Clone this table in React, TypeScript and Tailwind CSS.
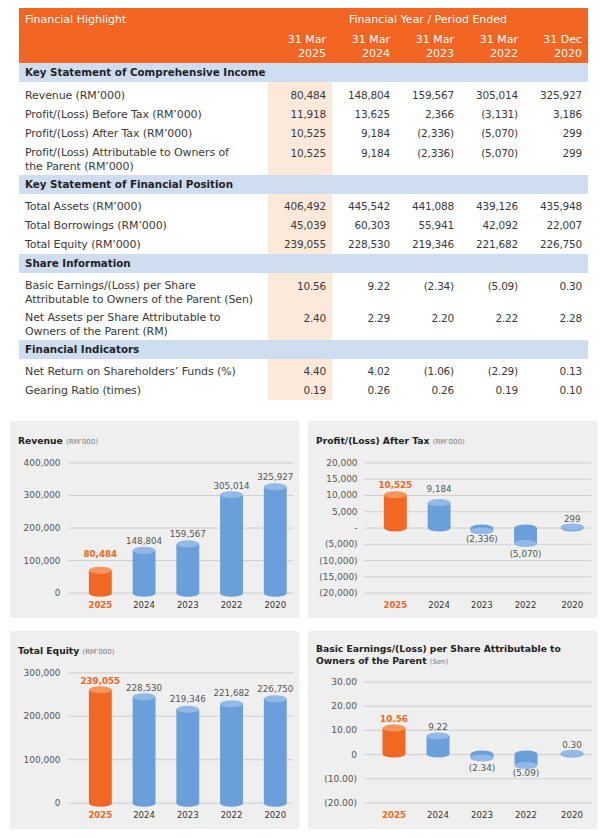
import React from "react";

type Row = { label: string[]; vals: string[] };
type Section = { title: string; spacer: string; rows: Row[] };

const sections: Section[] = [
  {
    title: "Key Statement of Comprehensive Income",
    spacer: "h-[4px]",
    rows: [
      { label: ["Revenue (RM’000)"], vals: ["80,484", "148,804", "159,567", "305,014", "325,927"] },
      { label: ["Profit/(Loss) Before Tax (RM’000)"], vals: ["11,918", "13,625", "2,366", "(3,131)", "3,186"] },
      { label: ["Profit/(Loss) After Tax (RM’000)"], vals: ["10,525", "9,184", "(2,336)", "(5,070)", "299"] },
      {
        label: ["Profit/(Loss) Attributable to Owners of", "the Parent (RM’000)"],
        vals: ["10,525", "9,184", "(2,336)", "(5,070)", "299"],
      },
    ],
  },
  {
    title: "Key Statement of Financial Position",
    spacer: "h-[3px]",
    rows: [
      { label: ["Total Assets (RM’000)"], vals: ["406,492", "445,542", "441,088", "439,126", "435,948"] },
      { label: ["Total Borrowings (RM’000)"], vals: ["45,039", "60,303", "55,941", "42,092", "22,007"] },
      { label: ["Total Equity (RM’000)"], vals: ["239,055", "228,530", "219,346", "221,682", "226,750"] },
    ],
  },
  {
    title: "Share Information",
    spacer: "h-[3px]",
    rows: [
      {
        label: ["Basic Earnings/(Loss) per Share", "Attributable to Owners of the Parent (Sen)"],
        vals: ["10.56", "9.22", "(2.34)", "(5.09)", "0.30"],
      },
      {
        label: ["Net Assets per Share Attributable to", "Owners of the Parent (RM)"],
        vals: ["2.40", "2.29", "2.20", "2.22", "2.28"],
      },
    ],
  },
  {
    title: "Financial Indicators",
    spacer: "h-[3px]",
    rows: [
      { label: ["Net Return on Shareholders’ Funds (%)"], vals: ["4.40", "4.02", "(1.06)", "(2.29)", "0.13"] },
      { label: ["Gearing Ratio (times)"], vals: ["0.19", "0.26", "0.26", "0.19", "0.10"] },
    ],
  },
];

const GRID = "grid grid-cols-[249px_64px_64px_64px_64px_64px]";
const FONT = "'DejaVu Sans', 'Liberation Sans', sans-serif";

function TableRow({ row }: { row: Row }) {
  const two = row.label.length > 1;
  const pad = two ? "pt-[3px] pb-[1px] leading-[14px]" : "h-[19px] leading-[19px]";
  return (
    <div className={GRID}>
      <div className={`${pad} pl-[6px] text-[11px] tracking-[-0.1px]`}>
        {row.label.map((l, i) => (
          <div key={i}>{l}</div>
        ))}
      </div>
      {row.vals.map((v, i) => (
        <div
          key={i}
          className={`${pad} pr-[6px] text-right text-[10.5px] tracking-[-0.2px] ${i === 0 ? "bg-[#fde9da]" : ""}`}
        >
          {v}
        </div>
      ))}
    </div>
  );
}

function Spacer({ cls }: { cls: string }) {
  return (
    <div className={GRID}>
      <div className={cls} />
      <div className={`${cls} bg-[#fde9da]`} />
    </div>
  );
}

type Bar = { cx: number; year: string; label: string; endY: number; labelY: number };
type ChartProps = {
  title: React.ReactNode;
  titleBottom: number;
  height: number;
  ticks: { label: string; y: number }[];
  gx1: number;
  gx2: number;
  lx: number;
  zeroY: number;
  bars: Bar[];
  yearY: number;
};

const BLUE = "#6a9fd9";
const BLUE_L = "#93b9e6";
const OR = "#f26722";
const OR_L = "#f8955d";

function Chart(p: ChartProps) {
  const rx = 11.5;
  const ry = 3.6;
  return (
    <div className="flex flex-col bg-[#efefef]" style={{ height: p.height }}>
      {p.title}
      <svg
        width={289}
        height={p.height - p.titleBottom}
        viewBox={`0 ${p.titleBottom} 289 ${p.height - p.titleBottom}`}
        style={{ fontFamily: FONT }}
      >
        {p.ticks.map((t, i) => (
          <g key={i}>
            <line x1={p.gx1} x2={p.gx2} y1={t.y} y2={t.y} stroke="#cfcfcf" strokeWidth={1} />
            <text x={p.lx} y={t.y} textAnchor="end" dominantBaseline="central" fontSize={9} fill="#555">
              {t.label}
            </text>
          </g>
        ))}
        {p.bars.map((b, i) => {
          const hi = i === 0;
          const body = hi ? OR : BLUE;
          const light = hi ? OR_L : BLUE_L;
          const y0 = p.zeroY;
          const y1 = b.endY;
          const top = Math.min(y0, y1);
          const h = Math.abs(y1 - y0);
          return (
            <g key={i}>
              <rect x={b.cx - rx} y={top} width={rx * 2} height={h} fill={body} />
              <ellipse cx={b.cx} cy={y0} rx={rx} ry={ry} fill={body} />
              <ellipse cx={b.cx} cy={y1} rx={rx} ry={ry} fill={light} />
              <text
                x={b.cx}
                y={b.labelY}
                textAnchor="middle"
                dominantBaseline="central"
                fontSize={8.8}
                fontWeight={hi ? 700 : 400}
                fill={hi ? OR : "#555"}
              >
                {b.label}
              </text>
              <text
                x={b.cx}
                y={p.yearY}
                textAnchor="middle"
                dominantBaseline="central"
                fontSize={8.6}
                fontWeight={hi ? 700 : 400}
                fill={hi ? OR : "#333"}
              >
                {b.year}
              </text>
            </g>
          );
        })}
      </svg>
    </div>
  );
}

function Title({ main, unit, two }: { main: React.ReactNode; unit: string; two?: boolean }) {
  return (
    <div
      className={`px-[8px] text-[9.2px] font-bold text-[#222] ${two ? "pt-[12px] leading-[12px]" : "pt-[13px] leading-[14px]"}`}
    >
      {main} <span className="text-[7px] font-normal text-[#777]">{unit}</span>
    </div>
  );
}

const years = ["2025", "2024", "2023", "2022", "2020"];

export default function App() {
  const revX = [90, 134, 178, 222, 266];
  const pX = [87, 131, 174, 218, 265];
  const eX = [86, 130, 174, 218, 264];

  const revTicks = ["400,000", "300,000", "200,000", "100,000", "0"].map((l, i) => ({
    label: l,
    y: 41 + i * 32.75,
  }));
  const pTicks = ["20,000", "15,000", "10,000", "5,000", "-", "(5,000)", "(10,000)", "(15,000)", "(20,000)"].map(
    (l, i) => ({ label: l, y: 41 + i * 16.375 })
  );
  const eqTicks = ["300,000", "200,000", "100,000", "0"].map((l, i) => ({ label: l, y: 41 + i * 43.67 }));
  const epsTicks = ["30.00", "20.00", "10.00", "0", "(10.00)", "(20.00)"].map((l, i) => ({
    label: l,
    y: 51 + i * 24.2,
  }));

  const mk = (xs: number[], ls: string[], ends: number[], labs: number[]): Bar[] =>
    xs.map((x, i) => ({ cx: x, year: years[i], label: ls[i], endY: ends[i], labelY: labs[i] }));

  const revBars = mk(
    revX,
    ["80,484", "148,804", "159,567", "305,014", "325,927"],
    [149, 129, 122.5, 73, 65],
    [133, 119.5, 113, 64, 55.5]
  );
  const patBars = mk(
    pX,
    ["10,525", "9,184", "(2,336)", "(5,070)", "299"],
    [73, 81, 109.5, 122, 105.5],
    [63, 67.5, 118, 132.5, 97.5]
  );
  const eqBars = mk(
    revX,
    ["239,055", "228,530", "219,346", "221,682", "226,750"],
    [58, 65, 77.5, 72, 67],
    [49, 56, 67, 61.5, 57.5]
  );
  const epsBars = mk(
    eX,
    ["10.56", "9.22", "(2.34)", "(5.09)", "0.30"],
    [97, 105, 127, 134.5, 122.3],
    [88, 96, 136.5, 141.5, 114]
  );

  return (
    <div className="w-[610px] h-[838px] bg-white text-[#3a3a3a] overflow-hidden" style={{ fontFamily: FONT }}>
      <div className="ml-[19px] mt-[8px] w-[569px]">
        <div className="bg-[#f26522] text-white pt-[5px] pb-[2px] text-[11px]">
          <div className={`${GRID} leading-[14px]`}>
            <div className="pl-[6px]">Financial Highlight</div>
            <div className="col-span-5 text-center">Financial Year / Period Ended</div>
          </div>
          <div className={`${GRID} mt-[6px] leading-[14px]`}>
            <div />
            {[
              ["31 Mar", "2025"],
              ["31 Mar", "2024"],
              ["31 Mar", "2023"],
              ["31 Mar", "2022"],
              ["31 Dec", "2020"],
            ].map((c, i) => (
              <div key={i} className="pr-[6px] text-right">
                <div>{c[0]}</div>
                <div>{c[1]}</div>
              </div>
            ))}
          </div>
        </div>
        {sections.map((s, si) => (
          <div key={si}>
            <div className="h-[19px] bg-[#cfddf1] pl-[6px] text-[10.3px] font-bold leading-[19px] text-[#222]">
              {s.title}
            </div>
            <Spacer cls={s.spacer} />
            {s.rows.map((r, ri) => (
              <TableRow key={ri} row={r} />
            ))}
          </div>
        ))}
      </div>

      <div className="ml-[10px] mt-[21px] grid grid-cols-[289px_289px] gap-x-[9px] gap-y-[13px]">
        <Chart
          title={<Title main="Revenue" unit="(RM’000)" />}
          titleBottom={27}
          height={197}
          ticks={revTicks}
          gx1={58}
          gx2={284}
          lx={50}
          zeroY={172}
          bars={revBars}
          yearY={184}
        />
        <Chart
          title={<Title main="Profit/(Loss) After Tax" unit="(RM’000)" />}
          titleBottom={27}
          height={197}
          ticks={pTicks}
          gx1={56}
          gx2={284}
          lx={49}
          zeroY={106.5}
          bars={patBars}
          yearY={184}
        />
        <Chart
          title={<Title main="Total Equity" unit="(RM’000)" />}
          titleBottom={27}
          height={198}
          ticks={eqTicks}
          gx1={58}
          gx2={284}
          lx={50}
          zeroY={172}
          bars={eqBars}
          yearY={184}
        />
        <Chart
          title={
            <Title
              two
              main={
                <>
                  Basic Earnings/(Loss) per Share Attributable to
                  <br />
                  Owners of the Parent
                </>
              }
              unit="(Sen)"
            />
          }
          titleBottom={37}
          height={198}
          ticks={epsTicks}
          gx1={56}
          gx2={284}
          lx={49}
          zeroY={123}
          bars={epsBars}
          yearY={184}
        />
      </div>
    </div>
  );
}
